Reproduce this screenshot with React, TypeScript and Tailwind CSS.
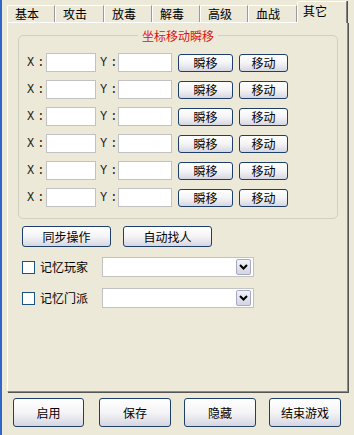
import React from "react";

const FONT = { fontFamily: '"Noto Sans CJK SC", "Noto Sans", sans-serif' };
const MONO = { fontFamily: '"Liberation Mono", monospace' };

const tabs = [
  { label: "基本", w: "w-[48px]" },
  { label: "攻击", w: "w-[49px]" },
  { label: "放毒", w: "w-[48px]" },
  { label: "解毒", w: "w-[48px]" },
  { label: "高级", w: "w-[48px]" },
  { label: "血战", w: "w-[49px]" },
];

function XpButton({ label, className }: { label: string; className: string }) {
  return (
    <button
      className={`flex items-center justify-center rounded-[3px] border border-[#1f3f6b] bg-gradient-to-b from-white via-[#f4f4f6] to-[#d6d6e2] text-[12px] leading-none text-black ${className}`}
    >
      {label}
    </button>
  );
}

function CoordRow() {
  return (
    <div className="flex h-[19px] items-center">
      <span className="ml-[8px] w-[19px] text-[12px] tracking-[3px] leading-none text-[#222]" style={MONO}>
        X:
      </span>
      <div className="h-[19px] w-[50px] border border-[#c2c2c2] bg-white" />
      <span className="w-[22px] pl-[4px] text-[12px] tracking-[3px] leading-none text-[#222]" style={MONO}>
        Y:
      </span>
      <div className="h-[19px] w-[54px] border border-[#c2c2c2] bg-white" />
      <XpButton label="瞬移" className="ml-[6px] h-[18px] w-[55px]" />
      <XpButton label="移动" className="ml-[6px] h-[18px] w-[49px]" />
    </div>
  );
}

function MemoryRow({ label, className }: { label: string; className: string }) {
  return (
    <div className={`flex h-[20px] items-center ${className}`}>
      <div className="ml-[14px] h-[13px] w-[13px] border border-[#1c5180] bg-white" />
      <span className="ml-[5px] w-[62px] text-[12px] leading-none">{label}</span>
      <div className="flex h-[20px] w-[152px] items-center justify-end border border-[#c2c2c2] bg-white pr-[2px]">
        <div className="flex h-[16px] w-[15px] items-center justify-center rounded-[2px] border border-[#a7a9c3] bg-gradient-to-b from-[#f2f2f8] to-[#d4d4e2]">
          <svg width="9" height="6" viewBox="0 0 9 6">
            <polyline points="1,1 4.5,4.5 8,1" fill="none" stroke="#000" strokeWidth="2" />
          </svg>
        </div>
      </div>
    </div>
  );
}

export default function App() {
  return (
    <div className="flex h-[435px] w-[354px] flex-col border-l-2 border-[#3066c8] bg-[#ece9d8] text-black" style={FONT}>
      {/* 탭 헤더 */}
      <div className="ml-[5px] mt-[1px] flex h-[21px] items-end">
        {tabs.map((t) => (
          <div
            key={t.label}
            className={`flex h-[17px] items-center rounded-tl-[2px] border-l border-t border-r border-l-white border-t-white border-r-[#9a9a9a] pl-[7px] text-[12px] leading-none ${t.w}`}
          >
            {t.label}
          </div>
        ))}
        <div className="relative z-10 -mb-[1px] flex h-[22px] w-[50px] items-start rounded-tl-[2px] border-l border-t border-r border-l-white border-t-white border-r-[#808080] bg-[#ece9d8] pl-[5px] pt-[3px] text-[12px] leading-none shadow-[1px_0_0_#505050]">
          其它
        </div>
      </div>

      {/* 탭 패널 */}
      <div className="ml-[5px] flex h-[370px] w-[341px] flex-col border border-l-white border-t-white border-r-[#8a8a8a] border-b-[#8a8a8a] shadow-[1px_1px_0_#555]">
        <div className="relative ml-[10px] mt-[12px] flex h-[184px] w-[320px] flex-col gap-[8px] rounded-[5px] border border-[#d0d0bf] pt-[17px]">
          <span className="absolute left-1/2 top-[-7px] -translate-x-1/2 bg-[#ece9d8] px-[4px] text-[12px] leading-[13px] text-[#e01010]">
            坐标移动瞬移
          </span>
          <CoordRow />
          <CoordRow />
          <CoordRow />
          <CoordRow />
          <CoordRow />
          <CoordRow />
        </div>

        <div className="ml-[14px] mt-[7px] flex gap-[12px]">
          <XpButton label="同步操作" className="h-[21px] w-[89px]" />
          <XpButton label="自动找人" className="h-[21px] w-[89px]" />
        </div>

        <MemoryRow label="记忆玩家" className="mt-[10px]" />
        <MemoryRow label="记忆门派" className="mt-[11px]" />
      </div>

      {/* 하단 버튼 */}
      <div className="ml-[11px] mt-[6px] flex">
        <XpButton label="启用" className="h-[29px] w-[71px]" />
        <XpButton label="保存" className="ml-[15px] h-[29px] w-[72px]" />
        <XpButton label="隐藏" className="ml-[13px] h-[29px] w-[72px]" />
        <XpButton label="结束游戏" className="ml-[13px] h-[29px] w-[72px]" />
      </div>
    </div>
  );
}
